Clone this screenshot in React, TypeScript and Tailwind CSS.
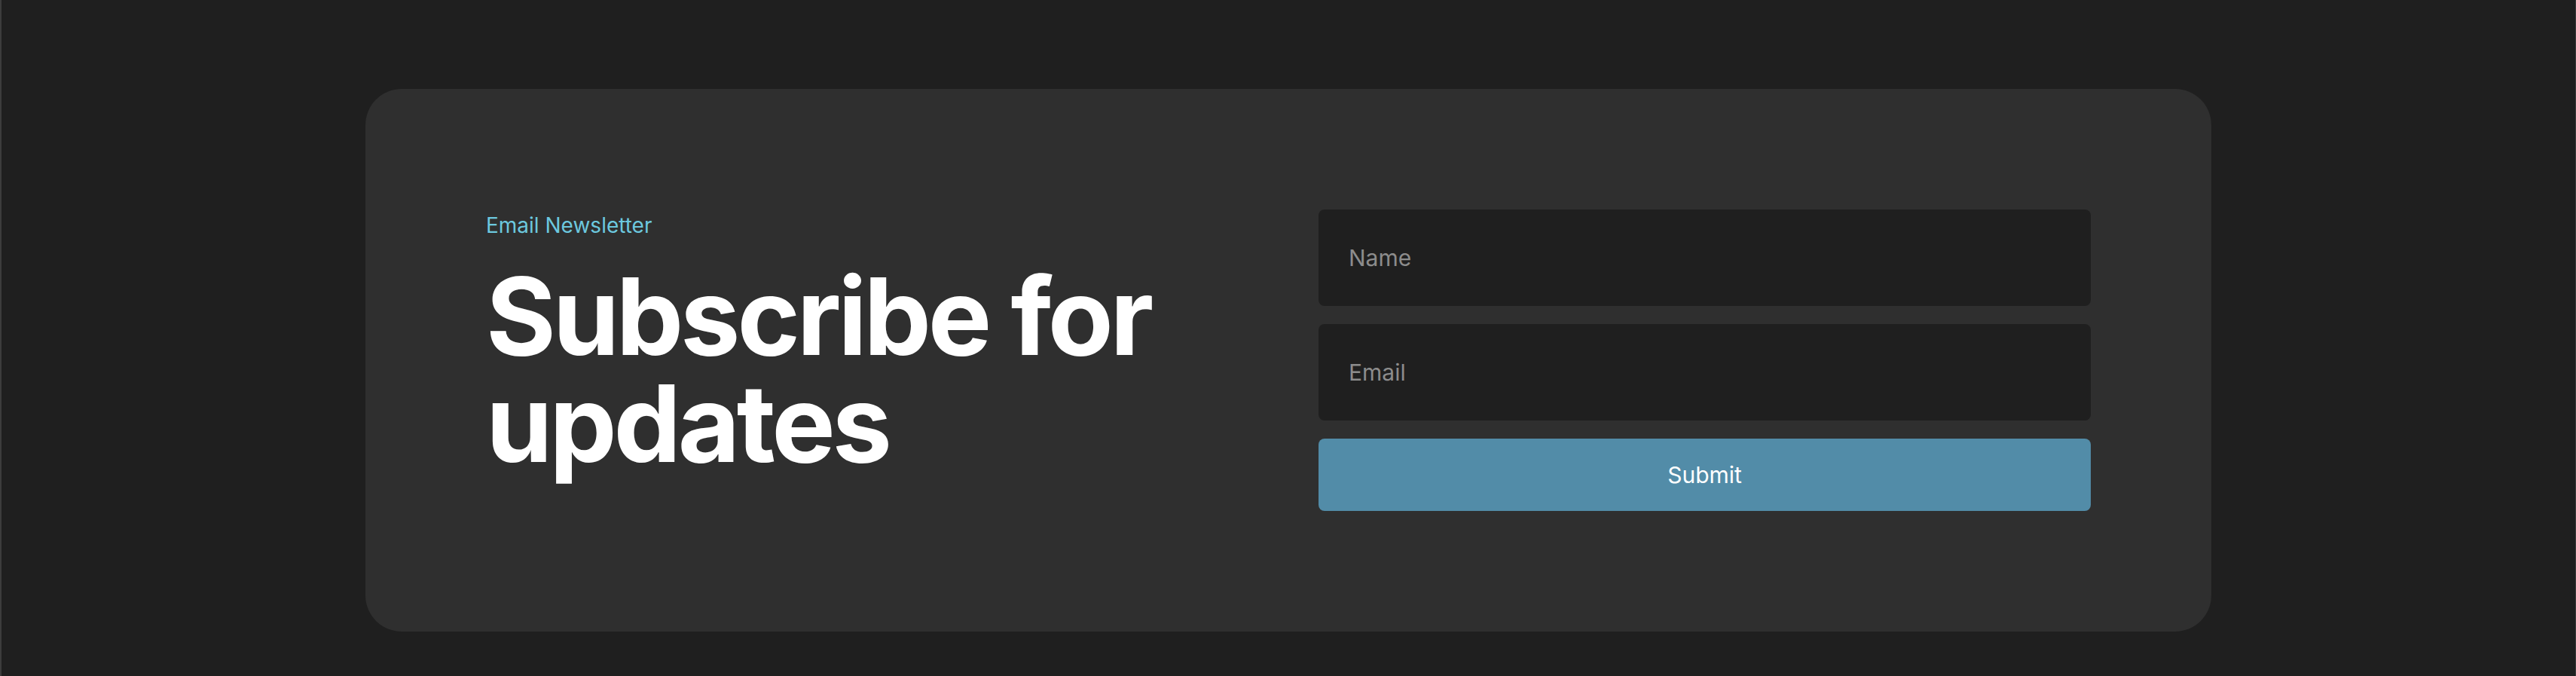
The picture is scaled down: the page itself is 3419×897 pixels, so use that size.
import React from "react";

export default function App() {
  return (
    <div className="box-border h-[897px] w-full overflow-hidden bg-[#1f1f1f] border-l-2 border-r border-[#3c3c3c] pt-[118px] font-['Inter','Noto_Sans',sans-serif]">
      <div className="mx-auto grid w-[2450px] grid-cols-2 gap-x-[80px] rounded-[48px] bg-[#2f2f2f] p-[160px]">
        <div className="flex flex-col">
          <p className="text-[28px] leading-[42px] text-[#6cc8df]">Email Newsletter</p>
          <h1 className="mt-[28px] text-[142px] font-bold leading-[142px] tracking-[-0.03em] text-white">
            Subscribe for updates
          </h1>
        </div>
        <form className="flex flex-col gap-[24px]" onSubmit={(e) => e.preventDefault()}>
          <input
            type="text"
            placeholder="Name"
            className="h-[128px] w-full rounded-lg bg-[#1f1f1f] px-[40px] text-[30px] text-white outline-none placeholder:text-[#8c8c8c]"
          />
          <input
            type="email"
            placeholder="Email"
            className="h-[128px] w-full rounded-lg bg-[#1f1f1f] px-[40px] text-[30px] text-white outline-none placeholder:text-[#8c8c8c]"
          />
          <button
            type="submit"
            className="h-[96px] w-full rounded-lg bg-[#528ca8] text-[30px] text-white"
          >
            Submit
          </button>
        </form>
      </div>
    </div>
  );
}
